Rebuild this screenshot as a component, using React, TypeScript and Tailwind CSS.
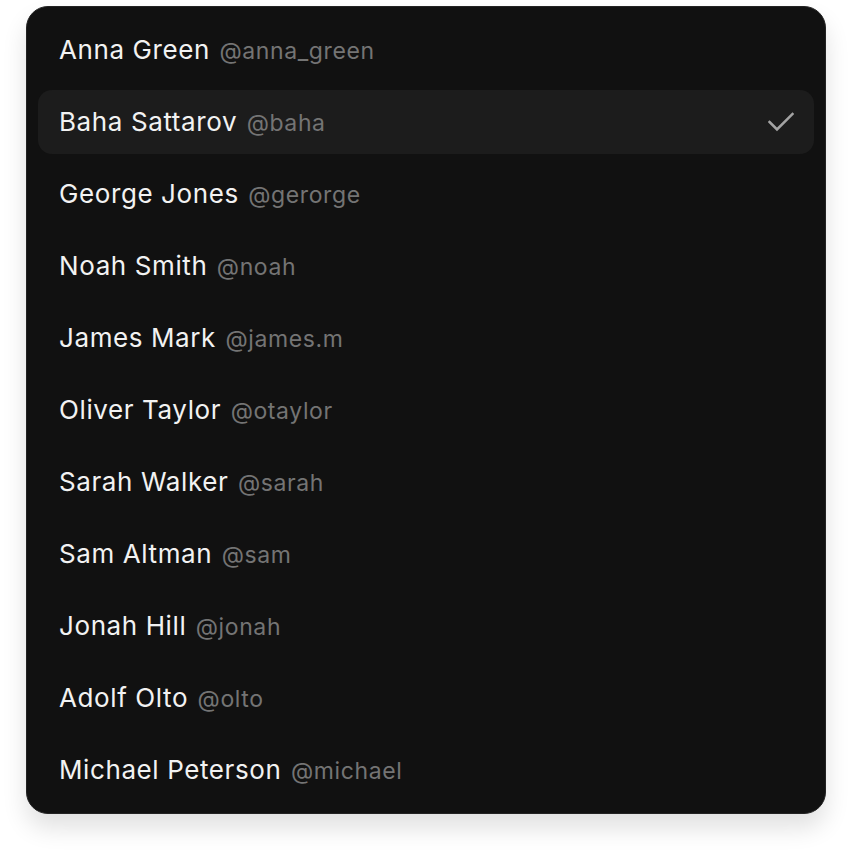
import React from 'react'

interface User {
  name: string
  handle: string
}

const users: User[] = [
  { name: 'Anna Green', handle: '@anna_green' },
  { name: 'Baha Sattarov', handle: '@baha' },
  { name: 'George Jones', handle: '@gerorge' },
  { name: 'Noah Smith', handle: '@noah' },
  { name: 'James Mark', handle: '@james.m' },
  { name: 'Oliver Taylor', handle: '@otaylor' },
  { name: 'Sarah Walker', handle: '@sarah' },
  { name: 'Sam Altman', handle: '@sam' },
  { name: 'Jonah Hill', handle: '@jonah' },
  { name: 'Adolf Olto', handle: '@olto' },
  { name: 'Michael Peterson', handle: '@michael' },
]

const selected = '@baha'

export default function App() {
  return (
    <div className="min-h-screen bg-white px-[26px] pt-[6px]" style={{ fontFamily: 'Inter, "Noto Sans", sans-serif' }}>
      {/* Mention list */}
      <div className="w-[800px] rounded-[22px] border border-[#232323] bg-[#111111] p-[11px] shadow-[0_14px_24px_rgba(0,0,0,0.12)]">
        <ul className="flex flex-col gap-2">
          {users.map((user) => {
            const isSelected = user.handle === selected
            return (
              <li
                key={user.handle}
                className={`flex h-16 items-center justify-between rounded-[14px] pl-[21px] pr-5 ${
                  isSelected ? 'bg-[#1c1c1c]' : ''
                }`}
              >
                <span className="leading-none">
                  <span className="text-[26px] tracking-[0.6px] text-[#f2f2f2]">{user.name}</span>{' '}
                  <span className="ml-[5px] text-[23px] tracking-[0.6px] text-[#747474]">{user.handle}</span>
                </span>
                {isSelected && (
                  <svg width="26" height="20" viewBox="0 0 26 20" fill="none" className="text-[#a3a3a3]">
                    <path d="M1.5 10 9 17.5 24.5 2" stroke="currentColor" strokeWidth="2.6" strokeLinecap="square" />
                  </svg>
                )}
              </li>
            )
          })}
        </ul>
      </div>
    </div>
  )
}
